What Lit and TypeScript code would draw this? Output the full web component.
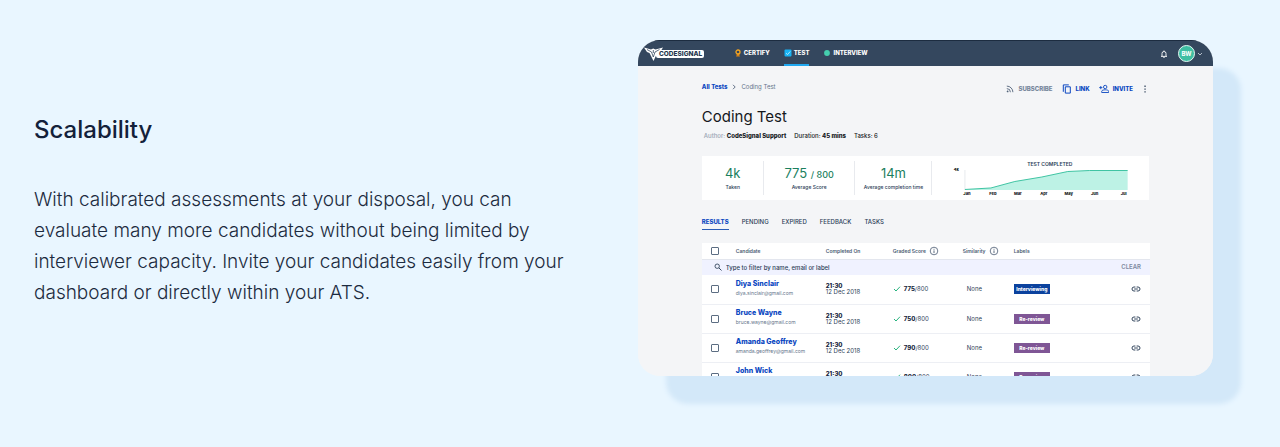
import { LitElement, html, css, svg } from "lit";
import { customElement } from "lit/decorators.js";

interface Candidate {
  id: string;
  name: string;
  email: string;
  score: number;
  label: string;
  tone: string;
}

const CANDIDATES: Candidate[] = [
  { id: "diya", name: "Diya Sinclair", email: "diya.sinclair@gmail.com", score: 775, label: "Interviewing", tone: "blue" },
  { id: "bruce", name: "Bruce Wayne", email: "bruce.wayne@gmail.com", score: 750, label: "Re-review", tone: "purple" },
  { id: "amanda", name: "Amanda Geoffrey", email: "amanda.geoffrey@gmail.com", score: 790, label: "Re-review", tone: "purple" },
  { id: "john", name: "John Wick", email: "john.wick@gmail.com", score: 800, label: "Re-review", tone: "purple" },
];

const MONTHS: [string, number][] = [
  ["Jan", 35], ["Feb", 61], ["Mar", 86], ["Apr", 112], ["May", 137], ["Jun", 163], ["Jul", 192],
];

const info = html`<svg class="info" viewBox="0 0 10 10" aria-hidden="true"><circle cx="5" cy="5" r="3.8" fill="none" stroke="currentColor" stroke-width=".8"/><path d="M5 4.4v2.7M5 2.8v.9" stroke="currentColor" stroke-width=".9"/></svg>`;

@customElement("test-dashboard")
export class TestDashboard extends LitElement {
  static styles = css`
    :host { display: block; font-family: Inter, "Liberation Sans", sans-serif; font-size: 6px; line-height: 8px; color: #2b3d57; background: #f4f5f7; }
    * { box-sizing: border-box; }
    svg { display: block; flex: none; }
    button { font: inherit; color: inherit; background: none; border: 0; padding: 0; margin: 0; }
    a { color: inherit; text-decoration: none; }
    .nav { display: flex; align-items: center; height: 26px; padding: 0 10px 0 6px; background: #34475e; border-top: 1px solid #1c2c40; color: #fff; }
    .logo { display: flex; align-items: center; width: 61px; }
    .mark { width: 61px; height: 16px; }
    .menu { display: flex; flex: 1; align-self: stretch; gap: 14px; margin-left: 29px; }
    .menu a { display: flex; align-items: center; gap: 2px; font-weight: 800; border-bottom: 2px solid transparent; }
    .menu a.current { border-color: #20a8f0; }
    .s8 { width: 8px; height: 8px; }
    .s10 { width: 10px; height: 10px; }
    .user { display: flex; align-items: center; gap: 2px; margin-left: 10px; }
    .avatar { display: grid; place-items: center; width: 17px; height: 17px; border-radius: 50%; background: #3fbfa3; border: 1px solid #e4f7f3; font-weight: 700; }
    .s6 { width: 6px; height: 6px; }
    .body { padding: 14px 63px 0 64px; }
    .top { display: flex; justify-content: space-between; align-items: flex-start; line-height: 14px; }
    .crumbs { display: flex; align-items: center; gap: 4px; color: #64748a; }
    .crumbs a { color: #0b47c1; font-weight: 800; }
    .actions { display: flex; align-items: center; gap: 9px; padding-top: 2px; color: #0b47c1; font-weight: 800; }
    .actions button { display: flex; align-items: center; gap: 4px; }
    .actions .muted { color: #74849a; }
    .actions .more { color: #34475e; }
    h2 { margin: 9px 0 2px; font-size: 15px; line-height: 24px; font-weight: 400; color: #15181c; }
    .meta { display: flex; gap: 8px; margin: 0 0 15px 2px; line-height: 10px; font-weight: 500; color: #15181c; }
    .meta b { font-weight: 800; }
    .meta i { font-style: normal; color: #98a4b3; }
    .stats { display: flex; height: 44px; margin-right: 1px; background: #fff; }
    .stat { display: flex; flex-direction: column; align-items: center; padding-top: 8px; position: relative; white-space: nowrap; font-size: 5px; font-weight: 500; }
    .stat::after { content: ""; position: absolute; right: 0; top: 5px; bottom: 5px; width: 1px; background: #e8eaee; }
    .stat strong { display: block; height: 19px; font-size: 13px; line-height: 19px; font-weight: 400; color: #1b7f5e; }
    .stat small { font-size: 9px; font-weight: 500; }
    .a { flex: 62 1 0; }
    .b { flex: 91 1 0; }
    .c { flex: 78 1 0; }
    .d { flex: 217 1 0; min-width: 0; }
    .chart { width: 100%; height: 44px; }
    .chart text { font-size: 4px; font-weight: 800; fill: #15181c; }
    .chart .title { font-size: 5px; font-weight: 600; fill: #2b3d57; }
    .tabs { display: flex; gap: 13px; margin-top: 15px; line-height: 14px; font-weight: 500; }
    .tabs button { border-bottom: 1px solid transparent; }
    .tabs .on { color: #0b47c1; font-weight: 800; border-color: #2a5cb5; }
    table { width: 100%; margin-top: 13px; border-collapse: collapse; table-layout: fixed; background: #fff; }
    th, td { padding: 0; text-align: left; vertical-align: middle; white-space: nowrap; }
    th { height: 16px; font-size: 5px; font-weight: 600; color: #4a5b72; }
    .c0 { width: 34px; } .c1 { width: 90px; } .c2 { width: 67px; } .c3 { width: 70px; } .c4 { width: 51px; } .c5 { width: 90px; }
    .first { padding-left: 9px; }
    .head { display: flex; align-items: center; gap: 3px; }
    .info { width: 10px; height: 10px; }
    input[type="checkbox"] { appearance: none; display: block; width: 8px; height: 8px; margin: 0; border: 1px solid #5c6d82; border-radius: 1px; background: #fff; }
    .filter td { height: 16px; background: #f0f2ff; border-top: 1px solid #e3e6ee; }
    .search { display: flex; align-items: center; gap: 4px; padding: 0 9px 0 12px; color: #34475e; }
    .search input { flex: 1; min-width: 0; border: 0; padding: 0; background: none; font: inherit; font-weight: 500; height: 10px; color: inherit; }
    .search input::placeholder { color: #2b3d57; opacity: 1; }
    .search button { color: #7d8aa0; font-weight: 600; }
    .row td { height: 29px; border-bottom: 1px solid #edeff4; }
    .row .person { padding-bottom: 3px; }
    .name { display: block; font-size: 7px; line-height: 10px; font-weight: 800; color: #0b47c1; }
    .mail { display: block; font-size: 5px; color: #64748a; }
    .when { display: block; line-height: 6px; }
    .when b, .score b { font-weight: 800; color: #15253c; }
    .score { display: flex; align-items: center; gap: 3px; }
    .row .none { padding-left: 4px; }
    .tag { display: block; width: 36px; line-height: 10px; text-align: center; font-size: 5px; font-weight: 800; color: #fff; }
    .blue { background: #0b429e; }
    .purple { background: #7f5695; }
    .last { padding-right: 9px; }
    .last a { display: flex; justify-content: flex-end; }
  `;

  render() {
    return html`
      <header class="nav">
        <a class="logo" href="#" aria-label="CodeSignal home">
          <svg class="mark" viewBox="0 0 61 16" role="img" aria-label="CodeSignal">
            <rect x="12" y="4" width="48" height="8" rx="2" fill="#fff"/>
            <path d="M0 1.500 7 3.500 9.200 2.500 11.500 3.500 19 1.500 16.500 5.500 13.500 6.500 9.500 15 5.500 7 3 6Z" fill="#fff"/>
            <path d="M3 3.500 7.500 6 9.300 11 11 6 15.500 3.500M9.300 4v3" fill="none" stroke="#34475e" stroke-width=".8"/>
            <text x="15" y="10.300" font-size="6.500" font-weight="800" fill="#24364d">CODESIGNAL</text>
          </svg>
        </a>
        <nav class="menu" aria-label="Products">
          <a href="#certify"><svg class="s8" viewBox="0 0 8 8"><path d="M2.500 4.500h3V8L4 7.200 2.500 8Z" fill="#d98314"/><circle cx="4" cy="3" r="2" fill="#34475e" stroke="#f5a623" stroke-width="1.300"/></svg>CERTIFY</a>
          <a class="current" href="#test"><svg class="s8" viewBox="0 0 8 8"><rect x=".5" y=".5" width="7" height="7" rx="1" fill="#18b4f5"/><path d="m2 4.200 1.500 1.400L6.200 2.500" fill="none" stroke="#d5f2ff" stroke-width=".8"/></svg>TEST</a>
          <a href="#interview"><svg class="s8" viewBox="0 0 8 8"><circle cx="4" cy="4" r="2.900" fill="#45cfae"/></svg>INTERVIEW</a>
        </nav>
        <button aria-label="Notifications"><svg class="s8" viewBox="0 0 8 8"><path d="M1 6.400h6M2 6.200V3.500a2 2 0 0 1 4 0v2.700M4 .5v1M3.300 7.400h1.400" fill="none" stroke="#fff" stroke-width=".9"/></svg></button>
        <button class="user" aria-label="Account"><span class="avatar">BW</span><svg class="s6" viewBox="0 0 6 6"><path d="m1 2 2 2 2-2" fill="none" stroke="#d5dce5" stroke-width=".8"/></svg></button>
      </header>
      <main class="body">
        <div class="top">
          <nav class="crumbs" aria-label="Breadcrumb"><a href="#tests">All Tests</a><svg class="s6" viewBox="0 0 6 6"><path d="m2 .8 2.200 2.200L2 5.200" fill="none" stroke="#52637a" stroke-width=".9"/></svg><span>Coding Test</span></nav>
          <div class="actions">
            <button class="muted"><svg class="s8" viewBox="0 0 8 8"><circle cx="1.600" cy="6.400" r=".9" fill="#52637a"/><path d="M.8 3.600a3.600 3.600 0 0 1 3.600 3.600M.8 1.100a6.100 6.100 0 0 1 6.100 6.100" fill="none" stroke="#52637a" stroke-width=".9"/></svg>SUBSCRIBE</button>
            <button><svg class="s10" viewBox="0 0 10 10"><path d="M1.300 7.800V.9h5.500M3.300 2.800h5v6.300h-5Z" fill="none" stroke="currentColor"/></svg>LINK</button>
            <button><svg class="s10" viewBox="0 0 10 10"><circle cx="6.200" cy="3" r="1.700" fill="none" stroke="currentColor" stroke-width=".9"/><path d="M2.700 8.500V7.300c0-2 7-2 7 0v1.200ZM1.800 2v3.200M.2 3.600h3.200" fill="none" stroke="currentColor" stroke-width=".9"/></svg>INVITE</button>
            <button class="more" aria-label="More"><svg class="s8" viewBox="0 0 8 8"><path d="M2.400.6h1.300v1.300H2.400ZM2.400 3.400h1.300v1.300H2.400ZM2.400 6.200h1.300v1.300H2.400Z" fill="currentColor"/></svg></button>
          </div>
        </div>
        <h2>Coding Test</h2>
        <p class="meta"><span><i>Author:</i> <b>CodeSignal Support</b></span><span>Duration: <b>45 mins</b></span><span>Tasks: 6</span></p>
        <section class="stats">
          <div class="stat a"><strong>4k</strong>Taken</div>
          <div class="stat b"><strong>775 <small>/ 800</small></strong>Average Score</div>
          <div class="stat c"><strong>14m</strong>Average completion time</div>
          <div class="d">
            <svg class="chart" viewBox="0 0 217 44" role="img" aria-label="Test completed">
              <text class="title" x="118" y="10" text-anchor="middle">TEST COMPLETED</text>
              <text x="27" y="15" text-anchor="end">4k</text>
              <path d="M33 14v20" stroke="#e1e4e9" stroke-width=".8"/>
              <path d="M33 33.500 59 32 83 25.500 110 21 136 15.500 158 14.500H196V34H33Z" fill="#bdf2e5"/>
              <path d="M33 33.500 59 32 83 25.500 110 21 136 15.500 158 14.500H196" fill="none" stroke="#3fc4a3"/>
              ${MONTHS.map(([m, x]) => svg`<text x=${x} y="39" text-anchor="middle">${m}</text>`)}
            </svg>
          </div>
        </section>
        <div class="tabs" role="tablist">
          <button class="on" role="tab" aria-selected="true">RESULTS</button>
          ${["PENDING", "EXPIRED", "FEEDBACK", "TASKS"].map((t) => html`<button role="tab" aria-selected="false">${t}</button>`)}
        </div>
        <table>
          <colgroup><col class="c0" /><col class="c1" /><col class="c2" /><col class="c3" /><col class="c4" /><col class="c5" /><col /></colgroup>
          <thead>
            <tr>
              <th class="first"><input type="checkbox" aria-label="Select all candidates" /></th>
              <th>Candidate</th><th>Completed On</th>
              <th><span class="head">Graded Score ${info}</span></th>
              <th><span class="head">Similarity ${info}</span></th>
              <th>Labels</th><th></th>
            </tr>
          </thead>
          <tbody>
            <tr class="filter"><td colspan="7"><div class="search">
              <svg class="s8" viewBox="0 0 8 8"><circle cx="3.200" cy="3.200" r="2.200" fill="none" stroke="currentColor" stroke-width=".9"/><path d="m4.900 4.900 2.600 2.600" stroke="currentColor"/></svg>
              <input type="text" aria-label="Filter candidates" placeholder="Type to filter by name, email or label" /><button>CLEAR</button>
            </div></td></tr>
            ${CANDIDATES.map((c) => html`<tr class="row">
              <td class="first"><input type="checkbox" aria-label="Select ${c.name}" /></td>
              <td class="person"><a class="name" href="#${c.id}">${c.name}</a><span class="mail">${c.email}</span></td>
              <td><span class="when"><b>21:30</b></span><span class="when">12 Dec 2018</span></td>
              <td><span class="score"><svg class="s8" viewBox="0 0 8 8"><path d="m1 4 2 2 4-4.300" fill="none" stroke="#27b37e"/></svg><span><b>${c.score}</b>/800</span></span></td>
              <td class="none">None</td>
              <td><span class="tag ${c.tone}">${c.label}</span></td>
              <td class="last"><a href="#${c.id}-report" aria-label="Open report"><svg class="s10" viewBox="0 0 10 10"><path d="M4.400 3H3a2 2 0 0 0 0 4h1.400M5.600 3H7a2 2 0 0 1 0 4H5.600M3.200 5h3.600" fill="none" stroke="#34475e"/></svg></a></td>
            </tr>`)}
          </tbody>
        </table>
      </main>
    `;
  }
}

@customElement("app-root")
export class AppRoot extends LitElement {
  static styles = css`
    :host { display: block; min-height: 100vh; box-sizing: border-box; background: #e9f6ff; font-family: Inter, "Liberation Sans", sans-serif; color: #13213a; }
    .feature { display: grid; grid-template-columns: 20fr 21fr; gap: 56px; align-items: start; padding: 40px 67px 72px 34px; }
    .copy { padding-top: 72px; }
    h1 { margin: 0 0 36px; font-size: 24px; line-height: 36px; font-weight: 500; }
    p { margin: 0; font-size: 19px; line-height: 31px; font-weight: 300; color: #1c2b40; }
    .frame { aspect-ratio: 12 / 7; overflow: hidden; border-radius: 22px; background: #f4f5f7; box-shadow: 28px 28px 5px #d3e8f9; }
    @media (max-width: 900px) { .feature { grid-template-columns: 1fr; } .copy { padding-top: 0; } }
  `;

  render() {
    return html`
      <section class="feature">
        <div class="copy">
          <h1>Scalability</h1>
          <p>With calibrated assessments at your disposal, you can evaluate many more candidates without being limited by interviewer capacity. Invite your candidates easily from your dashboard or directly within your ATS.</p>
        </div>
        <div class="frame"><test-dashboard></test-dashboard></div>
      </section>
    `;
  }
}
